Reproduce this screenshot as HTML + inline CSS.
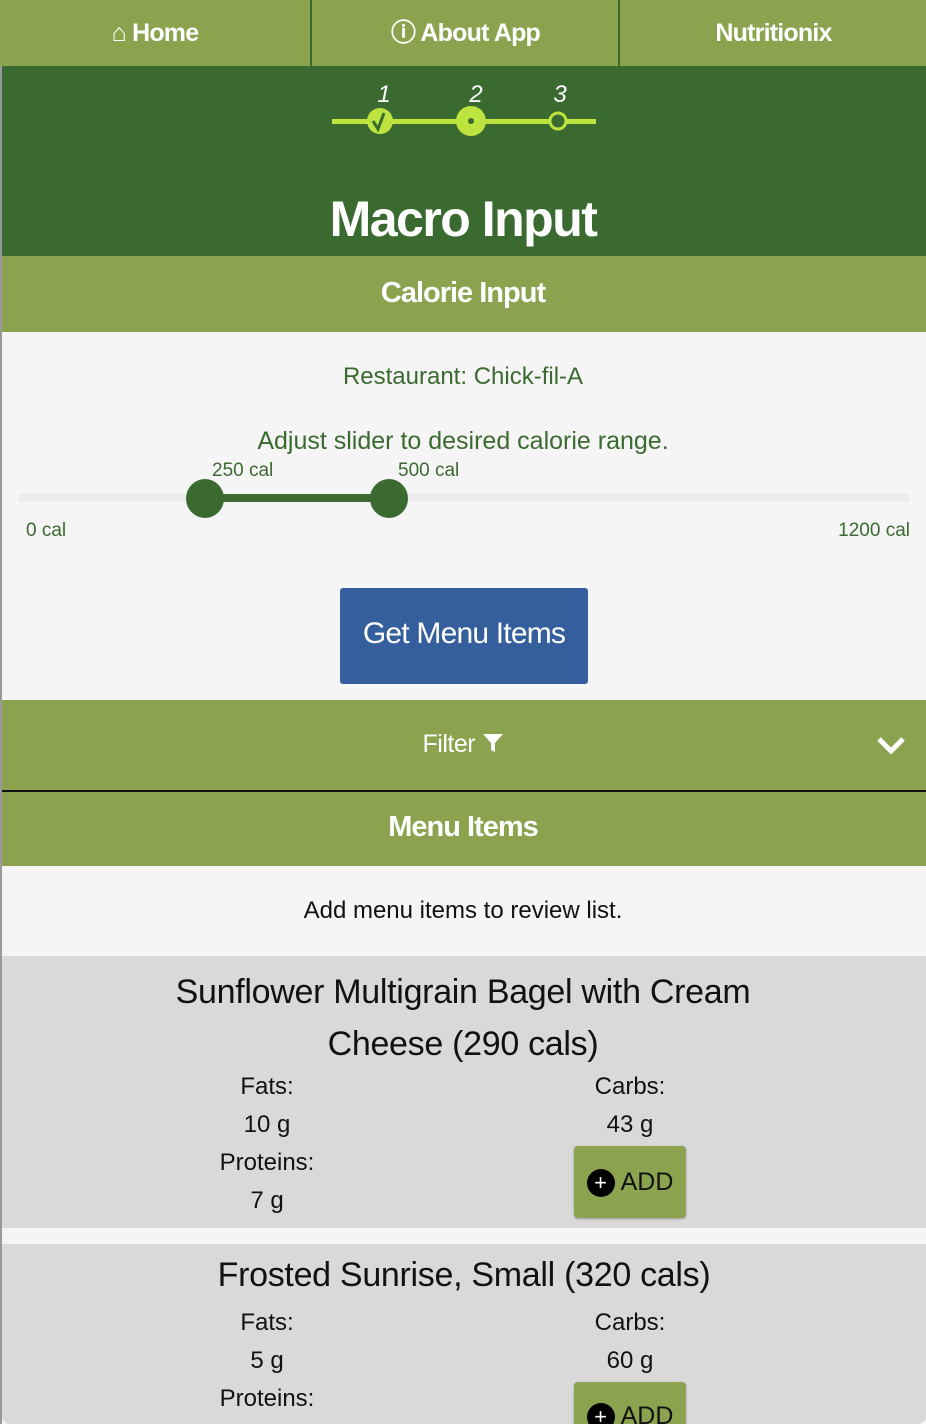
<!DOCTYPE html>
<html style="width:926px;height:1424px;overflow:hidden"><head><meta charset="utf-8"><style>
*{margin:0;padding:0;box-sizing:border-box}
body{width:926px;height:1424px;overflow:hidden;background:#f5f5f5;font-family:"Liberation Sans",sans-serif;position:relative}
.abs{position:absolute}
.c{text-align:center;left:0;right:0}
.nav{top:0;left:0;width:926px;height:66px;background:#8ba34f}
.nav div{position:absolute;top:0;height:66px;line-height:66px;color:#fff;font-size:25px;font-weight:bold;text-align:center;letter-spacing:-0.8px}
.sep{position:absolute;top:0;width:2px;height:66px;background:#3b6a31}
.w{color:#fff;font-weight:bold}
.card{left:2px;right:0;background:#d9d9d9;overflow:hidden}
.t{color:#111;font-size:24px;position:absolute;text-align:center;width:200px}
.add{position:absolute;background:#8ba34f;border-radius:4px;width:112px;height:72px;color:#111;font-size:25px;box-shadow:0 1px 2px rgba(0,0,0,.3)}
.plus{display:inline-block;width:28px;height:28px;border-radius:50%;background:#000;color:#fff;text-align:center;line-height:27px;font-size:22px;vertical-align:middle;margin-right:6px}
</style></head><body>
<div class="abs" style="left:0;top:0;width:2px;height:1424px;background:#999"></div>
<div class="abs nav">
<div style="left:0;width:310px">⌂ Home</div>
<div style="left:312px;width:307px">ⓘ About App</div>
<div style="left:621px;width:305px">Nutritionix</div>
<span class="sep" style="left:310px"></span><span class="sep" style="left:618px"></span>
</div>
<div class="abs" style="top:66px;left:2px;right:0;height:190px;background:#3b6a31"></div>
<svg class="abs" style="left:320px;top:76px" width="290" height="64">
<rect x="12" y="43" width="264" height="5" fill="#bde33f"/>
<circle cx="60" cy="45" r="13" fill="#bde33f"/>
<path d="M53 45 l5 8 l6-16" stroke="#3b6a31" stroke-width="3" fill="none"/>
<circle cx="151" cy="45" r="15" fill="#bde33f"/><circle cx="151" cy="45" r="3" fill="#3b6a31"/>
<circle cx="238" cy="45" r="8" fill="#3b6a31" stroke="#bde33f" stroke-width="3"/>
<text x="64" y="26" fill="#fff" font-size="24" font-style="italic" text-anchor="middle" font-family="Liberation Sans">1</text>
<text x="156" y="26" fill="#fff" font-size="24" font-style="italic" text-anchor="middle" font-family="Liberation Sans">2</text>
<text x="240" y="26" fill="#fff" font-size="24" font-style="italic" text-anchor="middle" font-family="Liberation Sans">3</text>
</svg>
<div class="abs c w" style="top:190px;font-size:50px;letter-spacing:-1.5px">Macro Input</div>
<div class="abs" style="top:256px;left:2px;right:0;height:76px;background:#8ba34f"></div>
<div class="abs c w" style="top:277px;font-size:29px;letter-spacing:-1px">Calorie Input</div>
<div class="abs c" style="top:363px;font-size:24px;color:#3b6a31">Restaurant: Chick-fil-A</div>
<div class="abs c" style="top:427px;font-size:25px;color:#3b6a31">Adjust slider to desired calorie range.</div>
<div class="abs" style="left:18px;width:892px;top:494px;height:8px;border-radius:4px;background:#ececec"></div>
<div class="abs" style="left:205px;width:184px;top:494px;height:8px;background:#3b6a31"></div>
<div class="abs" style="left:186px;top:479px;width:38px;height:39px;border-radius:50%;background:#3b6a31"></div>
<div class="abs" style="left:370px;top:479px;width:38px;height:39px;border-radius:50%;background:#3b6a31"></div>
<div class="abs" style="left:212px;top:460px;font-size:19px;color:#3b6a31">250 cal</div>
<div class="abs" style="left:398px;top:460px;font-size:19px;color:#3b6a31">500 cal</div>
<div class="abs" style="left:26px;top:520px;font-size:19px;color:#3b6a31">0 cal</div>
<div class="abs" style="right:16px;top:520px;font-size:19px;color:#3b6a31">1200 cal</div>
<div class="abs" style="left:340px;top:588px;width:248px;height:96px;background:#355f9c;border-radius:3px;color:#fff;font-size:30px;text-align:center;line-height:92px;letter-spacing:-0.8px">Get Menu Items</div>
<div class="abs" style="top:700px;left:2px;right:0;height:90px;background:#8ba34f"></div>
<div class="abs c" style="top:730px;font-size:25px;color:#fff;letter-spacing:-0.5px">Filter <svg width="22" height="20" style="vertical-align:-1px"><path d="M1 1 H21 L13 10 V19 L9 17 V10 Z" fill="#fff"/></svg></div>
<svg class="abs" style="left:876px;top:734px" width="30" height="22"><path d="M3 5 L15 17 L27 5" stroke="#fff" stroke-width="5" fill="none"/></svg>
<div class="abs" style="top:790px;left:2px;right:0;height:2px;background:#111"></div>
<div class="abs" style="top:792px;left:2px;right:0;height:74px;background:#8ba34f"></div>
<div class="abs c w" style="top:811px;font-size:29px;letter-spacing:-1px">Menu Items</div>
<div class="abs c" style="top:897px;font-size:24px;color:#111">Add menu items to review list.</div>
<div class="abs card" style="top:956px;height:272px"></div>
<div class="abs c" style="top:966px;font-size:34px;color:#111;line-height:52px;letter-spacing:-0.3px">Sunflower Multigrain Bagel with Cream<br>Cheese (290 cals)</div>
<div class="t" style="left:167px;top:1073px">Fats:</div>
<div class="t" style="left:530px;top:1073px">Carbs:</div>
<div class="t" style="left:167px;top:1111px">10 g</div>
<div class="t" style="left:530px;top:1111px">43 g</div>
<div class="t" style="left:167px;top:1149px">Proteins:</div>
<div class="t" style="left:167px;top:1187px">7 g</div>
<div class="add" style="left:574px;top:1146px;line-height:72px;text-align:center"><span class="plus">+</span>ADD</div>
<div class="abs card" style="top:1244px;height:180px;border-radius:0 0 8px 8px">
<div class="abs c" style="top:12px;font-size:34px;color:#111;letter-spacing:-0.3px">Frosted Sunrise, Small (320 cals)</div>
<div class="t" style="left:165px;top:65px">Fats:</div>
<div class="t" style="left:528px;top:65px">Carbs:</div>
<div class="t" style="left:165px;top:103px">5 g</div>
<div class="t" style="left:528px;top:103px">60 g</div>
<div class="t" style="left:165px;top:141px">Proteins:</div>
<div class="add" style="left:572px;top:138px;text-align:center;padding-top:20px;height:60px"><span class="plus">+</span>ADD</div>
</div>
</body></html>
